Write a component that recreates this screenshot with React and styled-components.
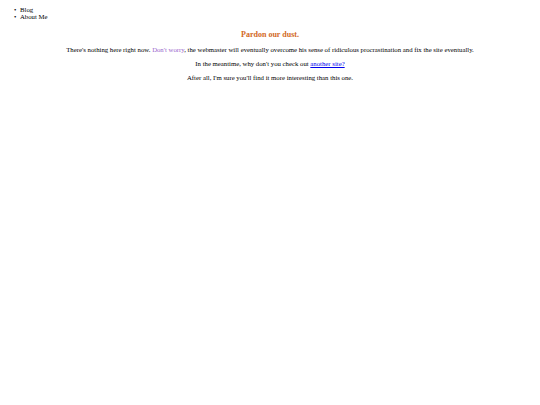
import React from "react";
import styled, { createGlobalStyle } from "styled-components";

const GlobalStyle = createGlobalStyle`
  body {
    margin: 4px;
    font-family: "Liberation Serif", "Times New Roman", serif;
    font-size: 6.75px;
    color: #000;
    background: #fff;
  }
`;

const NavList = styled.ul`
  margin: 2px 0 0;
  padding-left: 16px;
  list-style: none;
`;

const NavItem = styled.li`
  line-height: 7px;

  &::before {
    content: "•";
    display: inline-block;
    width: 6px;
    margin-left: -6px;
  }
`;

const Main = styled.main`
  text-align: center;
`;

const Heading = styled.h1`
  color: #d2691e;
  font-size: 8px;
  font-weight: bold;
  margin: 10px 0 6px;
`;

const Para = styled.p`
  margin: 5px 0;
  line-height: 9px;
`;

const Soft = styled.span`
  color: #9966cc;
`;

const Link = styled.a`
  color: #0000ee;
  text-decoration: underline;
`;

export default function App() {
  return (
    <>
      <GlobalStyle />
      <nav>
        <NavList>
          <NavItem>Blog</NavItem>
          <NavItem>About Me</NavItem>
        </NavList>
      </nav>
      <Main>
        <Heading>Pardon our dust.</Heading>
        <Para>
          There's nothing here right now. <Soft>Don't worry</Soft>, the webmaster
          will eventually overcome his sense of ridiculous procrastination and fix
          the site eventually.
        </Para>
        <Para>
          In the meantime, why don't you check out <Link href="#">another site?</Link>
        </Para>
        <Para>After all, I'm sure you'll find it more interesting than this one.</Para>
      </Main>
    </>
  );
}
